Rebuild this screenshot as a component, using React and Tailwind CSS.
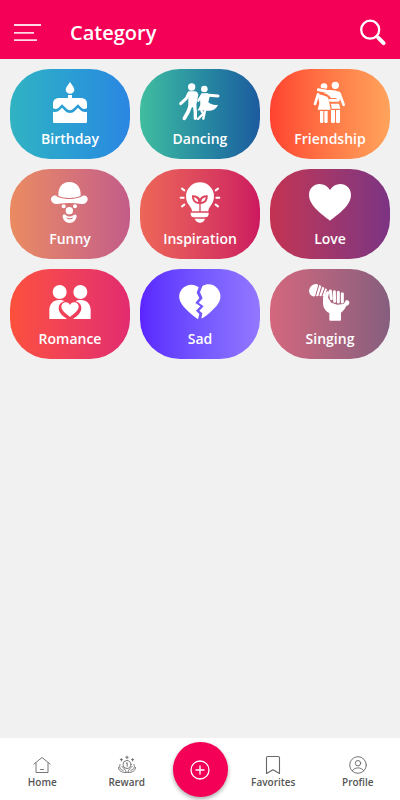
function Icon({ children }) {
  return (
    <svg viewBox="0 0 132 132" className="size-11" fill="currentColor" aria-hidden="true">
      {children}
    </svg>
  );
}

function Cake() {
  return (
    <Icon>
      <path d="M66 6C72 16 79 22 79 29a13 12 0 0 1-26 0C53 22 60 16 66 6Z" />
      <path d="M60 45h12v11h-12z" />
      <path d="M31 54h70a16 16 0 0 1 16 16v14c-5 4-11 4-16 0l-11-11-15 14c-5 5-13 5-18 0L42 73 31 84c-5 4-11 4-16 0V70a16 16 0 0 1 16-16Z" />
      <path d="M15 95c8 2 15 0 21-6l6-6 9 9c8 9 22 9 30 0l9-9 6 6c6 6 13 8 21 6v30a4 4 0 0 1-4 4H19a4 4 0 0 1-4-4Z" />
    </Icon>
  );
}

function Dancers() {
  return (
    <Icon>
      <circle cx="41" cy="21" r="11" />
      <path d="M32 34h18c6 0 10 4 11 10l-6 30v8H31V52Z" />
      <g fill="none" stroke="currentColor" strokeLinecap="round" strokeLinejoin="round">
        <path d="M33 39 25 55 8 71" strokeWidth="9" />
        <path d="M37 78 30 96 19 115" strokeWidth="11" />
        <path d="M50 78 52 96V115" strokeWidth="10" />
        <path d="M72 45 61 62" strokeWidth="7" />
        <path d="M84 45 120 48" strokeWidth="9" />
        <path d="M70 92 76 101 60 117M81 92 76 116" strokeWidth="7" />
      </g>
      <circle cx="79" cy="27" r="10" />
      <path d="M70 40h20l5 10-4 17c9 7 19 9 29 7-6 15-19 20-36 18-9-2-17-1-26 0 5-7 8-13 9-20l-1-17Z" />
    </Icon>
  );
}

function Friends() {
  return (
    <Icon>
      <path d="M38 19a10 10 0 0 1 20 1c0 3-1 5-2 6l-17-3Z" />
      <circle cx="82" cy="16" r="11" />
      <path d="M28 41c15 5 31 6 33 14l7 34H29l5-21Z" />
      <path d="M66 50c-6-6-12-9-20-11l20-5h22c7 0 9 4 10 9l-3 18-12-7H69ZM69 71h24l4 15H71Z" />
      <g fill="none" stroke="currentColor" strokeLinecap="round" strokeLinejoin="round">
        <path d="M31 29 56 34 82 36" strokeWidth="9" />
        <path d="M30 43 21 72" strokeWidth="8" />
        <path d="M94 40 107 74" strokeWidth="8" />
        <path d="M66 61H91" strokeWidth="8" />
      </g>
      <path d="M36 93h10v33c0 4-10 4-10 0ZM49 93h10v33c0 4-10 4-10 0ZM69 90h12v36c0 4-12 4-12 0ZM84 90h12v36c0 4-12 4-12 0Z" />
    </Icon>
  );
}

function Clown() {
  return (
    <Icon>
      <path d="M31 47C30 22 42 6 64 6s35 16 34 41c-18 9-49 9-67 0Z" />
      <path d="M24 47c2 1 4 4 8 5 18 7 46 7 64 0 4-1 6-4 9-5 8-2 15 5 14 12s-9 14-18 13c-24-4-50-4-74 0-9 1-17-6-18-13s7-14 15-12Z" />
      <circle cx="47" cy="79" r="6" />
      <circle cx="81" cy="79" r="6" />
      <circle cx="64" cy="92" r="11" />
      <path fillRule="evenodd" d="M44 109c0-6 5-8 9-4 7 6 16 6 24 0 5-4 9-1 9 4-2 13-11 20-21 20s-20-7-21-20Zm10 3c5 9 18 9 22 0-7 4-15 4-22 0Z" />
    </Icon>
  );
}

function Bulb() {
  return (
    <Icon>
      <path fillRule="evenodd" d="M64 94H42c0-14-18-20-18-45a42 42 0 0 1 84 0c0 25-17 31-17 45H68V72c15 0 22-10 21-26-12-1-20 3-23 10-4-7-12-11-24-10-1 16 7 26 22 26ZM48 52c7 1 12 6 13 14-8-1-13-6-13-14Zm35 0c0 8-5 13-13 14 0-8 5-13 13-14Z" />
      <path d="M38 98h54v4c0 6-4 10-10 10H48c-6 0-10-4-10-10ZM50 116h31c-2 8-8 12-15 12s-13-4-16-12Z" />
      <path d="M8 53h9M115 53h9M12 26l7 5M120 26l-7 5M12 79l7-5M120 79l-7-5" fill="none" stroke="currentColor" strokeWidth="6" strokeLinecap="round" />
    </Icon>
  );
}

function Heart() {
  return (
    <Icon>
      <path d="M66 122C45 105 3 78 3 45 3 24 18 12 35 12c13 0 24 6 31 18 7-12 18-18 31-18 17 0 32 12 32 33 0 33-42 60-63 77Z" />
    </Icon>
  );
}

function Couple() {
  return (
    <Icon>
      <circle cx="35" cy="36" r="21" />
      <circle cx="97" cy="36" r="21" />
      <path d="M4 117V90c0-18 12-30 29-30 8 0 13 1 17 4-12 2-18 11-18 21 0 13 12 24 25 32ZM128 117V90c0-18-12-30-29-30-8 0-13 1-17 4 12 2 18 11 18 21 0 13-12 24-25 32Z" />
      <path d="M66 111C56 101 40 92 40 80c0-8 6-13 13-13s11 4 13 8c2-4 6-8 13-8s13 5 13 13c0 12-16 21-26 31Z" />
    </Icon>
  );
}

function BrokenHeart() {
  return (
    <Icon>
      <path d="M62 22C46 8 23 14 12 27-3 46 4 65 17 80c13 14 28 27 43 38l4-16-10-10 13-13-15-10 12-15-8-16Z" />
      <path d="M73 19c15-10 34-7 46 7 12 15 11 34-3 51-13 15-28 28-43 38h-3l3-15-9-8 13-13-15-11 12-13-8-18Z" />
    </Icon>
  );
}

function MicHand() {
  return (
    <Icon>
      <path d="M19 13c4-2 8-1 12 1l-10 35C9 51 1 40 4 28c2-8 8-13 15-15ZM34 15l6 3-9 30-7 1ZM43 20l6 3-9 26-6-1ZM52 25l5 3-7 20-7 1Z" />
      <path d="M48 47l8-12c3-4 8-1 7 4l-3 14 10 15 18 6 19-2 4-6c4-1 6 2 5 6-2 12-9 20-17 26v21c0 2-1 3-3 3H67c-2 0-3-1-3-3V99C51 93 45 82 45 69V52Z" />
      <path d="M67 33 70 56M79 35 80 64M91 37V66M103 41V66" fill="none" stroke="currentColor" strokeWidth="9" strokeLinecap="round" />
      <path d="M112 62c7-4 13 1 12 7s-5 9-12 9Z" />
    </Icon>
  );
}

const categories = [
  { name: "Birthday", Art: Cake, color: "from-[#31b3c2] to-[#2b86e2]" },
  { name: "Dancing", Art: Dancers, color: "from-[#40bd9f] to-[#1d5b9e]" },
  { name: "Friendship", Art: Friends, color: "from-[#ff4130] to-[#ffa35c]" },
  { name: "Funny", Art: Clown, color: "from-[#ea8b60] to-[#c45c88]" },
  { name: "Inspiration", Art: Bulb, color: "from-[#ed6658] to-[#cc175f]" },
  { name: "Love", Art: Heart, color: "from-[#c33251] to-[#7c3382]" },
  { name: "Romance", Art: Couple, color: "from-[#fc503c] to-[#e22b6f]" },
  { name: "Sad", Art: BrokenHeart, color: "from-[#5b24ff] to-[#9377ff]" },
  { name: "Singing", Art: MicHand, color: "from-[#d4677d] to-[#865e7e]" },
];

function NavIcon({ children }) {
  return (
    <svg viewBox="0 0 20 20" className="size-5" fill="none" stroke="currentColor" strokeLinecap="round" strokeLinejoin="round" aria-hidden="true">
      {children}
    </svg>
  );
}

function NavLink({ label, children }) {
  return (
    <a href={"#" + label.toLowerCase()} className="flex flex-1 flex-col items-center pt-[17px] text-[#666]">
      {children}
      <span className="text-[10px] leading-[15px] font-semibold text-[#555]">{label}</span>
    </a>
  );
}

export default function App() {
  return (
    <div className="flex min-h-screen flex-col bg-[#f1f1f1] font-['Open_Sans','Noto_Sans',sans-serif]">
      <header className="flex h-[59px] items-center bg-[#f50057] pt-1.5 pr-3 pl-3.5 text-white">
        <button type="button" aria-label="Menu" className="size-7">
          <svg viewBox="0 0 28 28" className="size-7" fill="none" stroke="currentColor" strokeOpacity="0.850" strokeWidth="1.800" aria-hidden="true">
            <path d="M0 6h27M0 13.800h20M0 21.200h23" />
          </svg>
        </button>
        <h1 className="ml-7 flex-1 text-xl font-semibold">Category</h1>
        <button type="button" aria-label="Search" className="size-7">
          <svg viewBox="0 0 28 28" className="size-7" fill="none" stroke="currentColor" strokeLinecap="round" aria-hidden="true">
            <circle cx="10.200" cy="10.700" r="9" strokeWidth="2.300" />
            <path d="M16.800 17.300l1.600 1.600" strokeWidth="2.400" />
            <path d="M18.400 18.900l5.200 5.200" strokeWidth="4" />
          </svg>
        </button>
      </header>

      <main className="flex-1">
        <ul className="grid grid-cols-3 gap-2.5 p-2.5">
          {categories.map(({ name, Art, color }) => (
            <li key={name}>
              <button type="button" className={"flex h-[90px] w-full flex-col items-center rounded-[40px] bg-linear-to-r pt-[11px] text-white " + color}>
                <Art />
                <span className="mt-[5px] text-sm leading-5 font-semibold">{name}</span>
              </button>
            </li>
          ))}
        </ul>
      </main>

      <nav className="flex h-[62px] bg-white">
        <NavLink label="Home">
          <NavIcon>
            <path d="M2 9l8-6.500 8 6.500M4 8v9.500h12V8M8.500 14.500h3" strokeWidth="0.900" />
          </NavIcon>
        </NavLink>
        <NavLink label="Reward">
          <NavIcon>
            <g strokeWidth="0.900">
              <circle cx="10" cy="9.500" r="4" />
              <path d="M9.300 8.300l.900-.500v3.500" />
              <path d="M10 1.200v2.600M8.800 2.300h2.400M4.400 3.600v2.400M3.300 4.600h2.200M15.600 3.600v2.400M14.500 4.600h2.200" />
              <path d="M3 9.500c-1 3 0 5 3 5.800M17 9.500c1 3 0 5-3 5.800M1.500 12.500c0 3 2.500 5 7.500 5M18.500 12.500c0 3-2.500 5-7.500 5M5 11.500c1 1.500 3.500 2.500 4.300 6M15 11.500c-1 1.500-3.500 2.500-4.300 6" />
            </g>
          </NavIcon>
        </NavLink>
        <div className="flex w-[62px] justify-center pt-1">
          <button type="button" aria-label="Create" className="flex size-[55px] items-center justify-center rounded-full bg-[#f50057] text-white shadow-[0_2px_4px_rgba(0,0,0,0.35)]">
            <svg viewBox="0 0 20 20" className="size-5" fill="none" stroke="currentColor" strokeWidth="1.300" strokeLinecap="round" aria-hidden="true">
              <circle cx="10" cy="10" r="9" />
              <path d="M10 6v8M6 10h8" />
            </svg>
          </button>
        </div>
        <NavLink label="Favorites">
          <NavIcon>
            <path d="M3.500 18.500V3c0-1 .7-1.500 1.500-1.500h10c.8 0 1.500.500 1.500 1.500v15.500L10 14.700Z" strokeWidth="1.100" />
          </NavIcon>
        </NavLink>
        <NavLink label="Profile">
          <NavIcon>
            <g strokeWidth="0.900">
              <circle cx="10" cy="10" r="8.300" />
              <circle cx="10" cy="8.200" r="2.700" />
              <path d="M4.200 15.800c2.500-4 9.100-4 11.600 0" />
            </g>
          </NavIcon>
        </NavLink>
      </nav>
    </div>
  );
}
